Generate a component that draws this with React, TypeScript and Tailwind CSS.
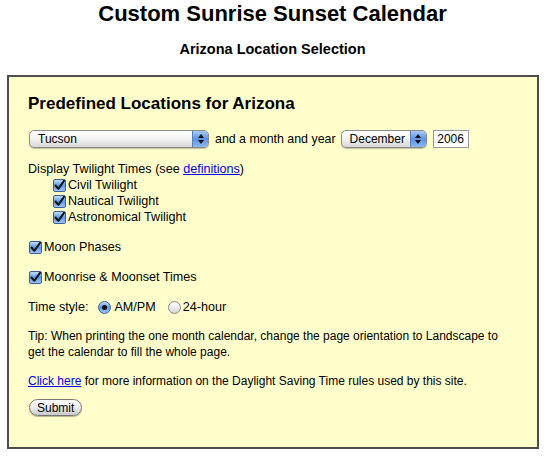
import React from 'react';

const font = { fontFamily: '"Liberation Sans", Arial, Helvetica, sans-serif' };

function AquaSelect({ label, width }: { label: string; width: string }) {
  return (
    <div
      className={`${width} h-[18px] flex items-stretch rounded-[5px] border border-[#8a8a8a] bg-gradient-to-b from-white via-[#f2f2f2] to-[#d8d8d8] shadow-[0_1px_1px_rgba(0,0,0,0.25)] overflow-hidden`}
    >
      <span className="flex-1 pl-[8px] text-[12px] leading-[16px] text-black">{label}</span>
      <span className="w-[16px] flex flex-col items-center justify-center gap-[2px] bg-gradient-to-b from-[#a9c9f5] via-[#5b93e6] to-[#8db8f2] border-l border-[#5a7fb8]">
        <svg width="6" height="4" viewBox="0 0 6 4"><path d="M0 4 L3 0 L6 4 Z" fill="#111" /></svg>
        <svg width="6" height="4" viewBox="0 0 6 4"><path d="M0 0 L3 4 L6 0 Z" fill="#111" /></svg>
      </span>
    </div>
  );
}

function Check() {
  return (
    <span className="w-[13px] h-[13px] shrink-0 rounded-[2px] border border-[#3d5f9a] bg-gradient-to-b from-[#c3dbfb] via-[#5c98ea] to-[#9ec4f5] flex items-center justify-center">
      <svg width="11" height="11" viewBox="0 0 11 11">
        <path d="M1.5 5.5 L4.3 8.8 L10 0.8" fill="none" stroke="#111" strokeWidth="2" strokeLinecap="round" strokeLinejoin="round" />
      </svg>
    </span>
  );
}

function CheckRow({ label, indent }: { label: string; indent?: boolean }) {
  return (
    <div className={`flex items-center h-[16px] ${indent ? 'pl-[25px]' : 'pl-[1px]'}`}>
      <Check />
      <span className="ml-[2px] text-[12.6px] leading-[16px]">{label}</span>
    </div>
  );
}

function Radio({ on }: { on: boolean }) {
  return (
    <span
      className={`w-[13px] h-[13px] shrink-0 rounded-full border flex items-center justify-center ${
        on
          ? 'border-[#3d5f9a] bg-gradient-to-b from-[#c3dbfb] via-[#5c98ea] to-[#9ec4f5]'
          : 'border-[#8a8a8a] bg-gradient-to-b from-white to-[#d6d6d6]'
      }`}
    >
      {on && <span className="w-[5px] h-[5px] rounded-full bg-[#111]" />}
    </span>
  );
}

export default function App() {
  return (
    <div className="w-[545px] h-[456px] bg-white text-black" style={font}>
      <h1 className="text-center text-[22px] leading-[28px] font-bold">Custom Sunrise Sunset Calendar</h1>
      <h2 className="mt-[12px] text-center text-[14.5px] leading-[19px] font-bold">Arizona Location Selection</h2>

      <div className="mt-[16px] ml-[7px] w-[532px] h-[374px] border-2 border-[#4d4d4d] bg-[#ffffcc] pt-[16px] pl-[19px] pr-[20px]">
        <h3 className="text-[17px] leading-[22px] font-bold">Predefined Locations for Arizona</h3>

        <div className="mt-[15px] flex items-center h-[18px] pl-[1px] text-[12.4px]">
          <AquaSelect label="Tucson" width="w-[180px]" />
          <span className="ml-[6px] mr-[5px]">and a month and year</span>
          <AquaSelect label="December" width="w-[86px]" />
          <span className="ml-[6px] w-[36px] h-[18px] bg-white border border-[#9a9a9a] text-[12px] leading-[16px] text-center">2006</span>
        </div>

        <div className="mt-[13px] text-[12.6px] leading-[16px]">
          Display Twilight Times (see <a href="#" className="text-[#0000ee] underline">definitions</a>)
        </div>
        <CheckRow label="Civil Twilight" indent />
        <CheckRow label="Nautical Twilight" indent />
        <CheckRow label="Astronomical Twilight" indent />

        <div className="mt-[14px]">
          <CheckRow label="Moon Phases" />
        </div>
        <div className="mt-[14px]">
          <CheckRow label="Moonrise & Moonset Times" />
        </div>

        <div className="mt-[14px] flex items-center h-[16px] text-[12.6px] leading-[16px]">
          <span>Time style:</span>
          <span className="ml-[10px]"><Radio on /></span>
          <span className="ml-[3px]">AM/PM</span>
          <span className="ml-[12px]"><Radio on={false} /></span>
          <span className="ml-[2px]">24-hour</span>
        </div>

        <p className="mt-[13px] text-[12px] leading-[16px]">
          Tip: When printing the one month calendar, change the page orientation to Landscape to get the calendar to fill the whole page.
        </p>

        <p className="mt-[13px] text-[12px] leading-[16px]">
          <a href="#" className="text-[#0000ee] underline">Click here</a> for more information on the Daylight Saving Time rules used by this site.
        </p>

        <button className="mt-[10px] ml-[1px] h-[17px] px-[7px] rounded-full border border-[#777] bg-gradient-to-b from-white via-[#ececec] to-[#c9c9c9] text-[12px] leading-[14px] shadow-[0_1px_1px_rgba(0,0,0,0.3)]">
          Submit
        </button>
      </div>
    </div>
  );
}
